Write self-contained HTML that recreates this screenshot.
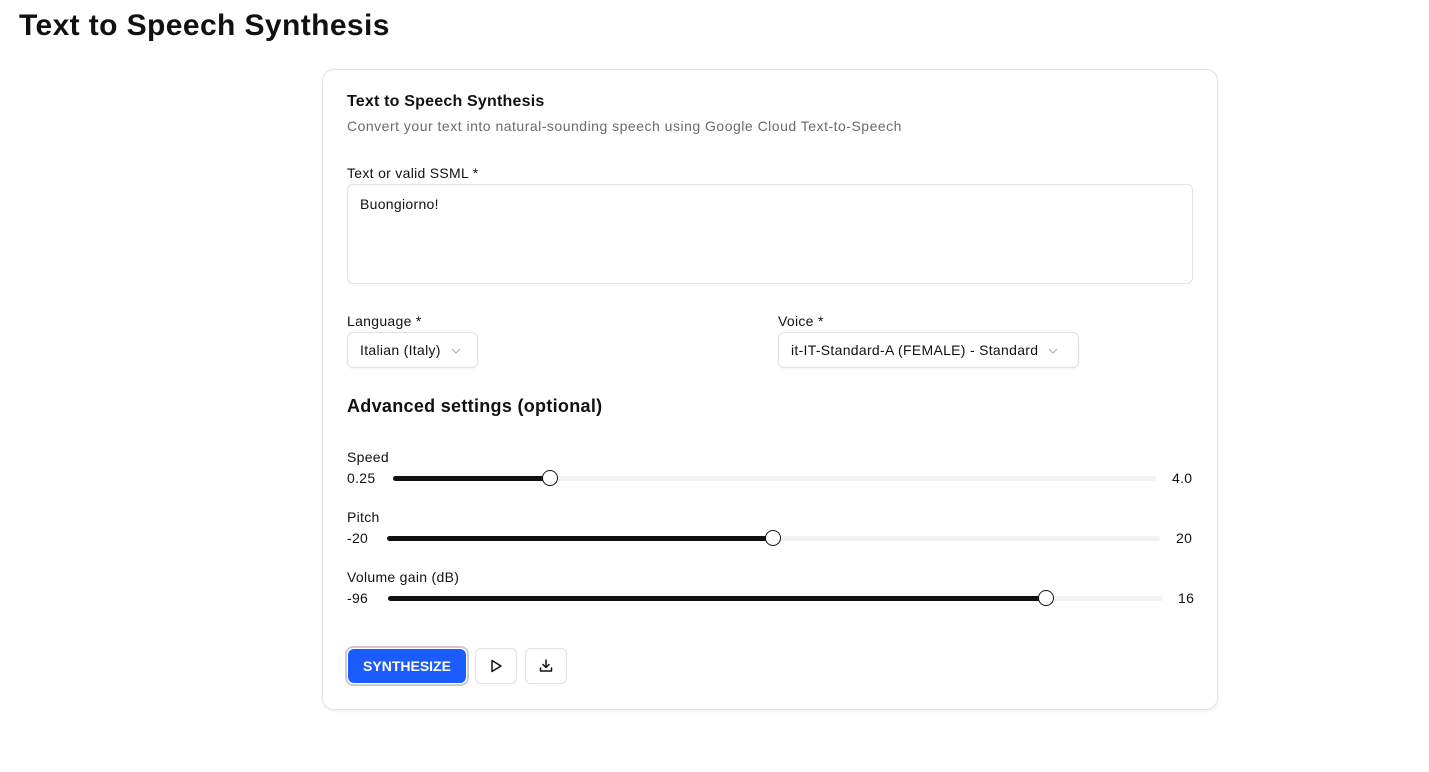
<!DOCTYPE html>
<html><head><meta charset="utf-8"><style>
*{box-sizing:border-box}
body{margin:0;background:#fff;font-family:"Liberation Sans",sans-serif;color:#111;width:1429px;height:772px;position:relative;overflow:hidden}
.abs{position:absolute}
h1{position:absolute;left:19px;top:9px;margin:0;font-size:30px;font-weight:bold;letter-spacing:0.4px}
.card{position:absolute;left:322px;top:69px;width:896px;height:641px;border:1px solid #e2e2e2;border-radius:12px;box-shadow:0 1px 3px rgba(0,0,0,.08)}
.t{font-size:14px;letter-spacing:0.3px}
.sel{position:absolute;height:36px;border:1px solid #e2e2e2;border-radius:6px;font-size:14px;letter-spacing:0.3px;padding:9px 12px;box-shadow:0 1px 2px rgba(0,0,0,.05)}
.sel svg{margin-left:10px;vertical-align:1px}
.track{position:absolute;height:5px;background:#f2f2f2;border-radius:3px}
.fill{position:absolute;left:0;top:0;height:5px;background:#111;border-radius:3px}
.thumb{position:absolute;top:-6px;width:16px;height:16px;border:1.5px solid #111;border-radius:50%;background:#fff;margin-left:-8px}
.btn{position:absolute;top:648px;width:42px;height:36px;border:1px solid #e2e2e2;border-radius:6px;display:flex;align-items:center;justify-content:center}
</style></head><body>
<h1>Text to Speech Synthesis</h1>
<div class="card"></div>
<div class="abs" style="left:347px;top:93px;font-size:16px;font-weight:bold;letter-spacing:0.2px">Text to Speech Synthesis</div>
<div class="abs t" style="left:347px;top:118px;color:#6b6b6b;letter-spacing:0.5px">Convert your text into natural-sounding speech using Google Cloud Text-to-Speech</div>
<div class="abs t" style="left:347px;top:165px">Text or valid SSML *</div>
<div class="abs t" style="left:347px;top:184px;width:846px;height:100px;border:1px solid #e2e2e2;border-radius:6px;padding:11px 12px">Buongiorno!</div>
<div class="abs t" style="left:347px;top:313px">Language *</div>
<div class="abs t" style="left:778px;top:313px">Voice *</div>
<div class="sel" style="left:347px;top:332px;width:131px">Italian (Italy)<svg width="10" height="6" viewBox="0 0 10 6"><path d="M1 1l4 4 4-4" fill="none" stroke="#aaa" stroke-width="1"/></svg></div>
<div class="sel" style="left:778px;top:332px;width:301px">it-IT-Standard-A (FEMALE) - Standard<svg width="10" height="6" viewBox="0 0 10 6"><path d="M1 1l4 4 4-4" fill="none" stroke="#aaa" stroke-width="1"/></svg></div>
<div class="abs" style="left:347px;top:396px;font-size:18px;font-weight:bold;letter-spacing:0.3px">Advanced settings (optional)</div>
<div class="abs t" style="left:347px;top:449px">Speed</div>
<div class="abs t" style="left:347px;top:470px">0.25</div>
<div class="track" style="left:393px;top:476px;width:763px"><div class="fill" style="width:157px"></div><div class="thumb" style="left:157px"></div></div>
<div class="abs t" style="left:1172px;top:470px">4.0</div>
<div class="abs t" style="left:347px;top:509px">Pitch</div>
<div class="abs t" style="left:347px;top:530px">-20</div>
<div class="track" style="left:387px;top:536px;width:773px"><div class="fill" style="width:386px"></div><div class="thumb" style="left:386px"></div></div>
<div class="abs t" style="left:1176px;top:530px">20</div>
<div class="abs t" style="left:347px;top:569px">Volume gain (dB)</div>
<div class="abs t" style="left:347px;top:590px">-96</div>
<div class="track" style="left:388px;top:596px;width:775px"><div class="fill" style="width:658px"></div><div class="thumb" style="left:658px"></div></div>
<div class="abs t" style="left:1178px;top:590px">16</div>
<div class="abs" style="left:345px;top:646px;width:124px;height:40px;border:2px solid #ccc;border-radius:8px"></div>
<div class="abs" style="left:348px;top:649px;width:118px;height:34px;background:#1a5cff;border-radius:6px;color:#fff;font-weight:bold;font-size:14px;display:flex;align-items:center;justify-content:center">SYNTHESIZE</div>
<div class="btn" style="left:475px"><svg width="14" height="14" viewBox="0 0 14 14"><path d="M3 1.5L12 7L3 12.5Z" fill="none" stroke="#111" stroke-width="1.5" stroke-linejoin="round"/></svg></div>
<div class="btn" style="left:525px"><svg width="14" height="14" viewBox="0 0 14 14" fill="none" stroke="#111" stroke-width="1.5" stroke-linecap="round" stroke-linejoin="round"><path d="M7 1v7M4 5.5L7 8.5L10 5.5M1.5 9v3h11V9"/></svg></div>
</body></html>
